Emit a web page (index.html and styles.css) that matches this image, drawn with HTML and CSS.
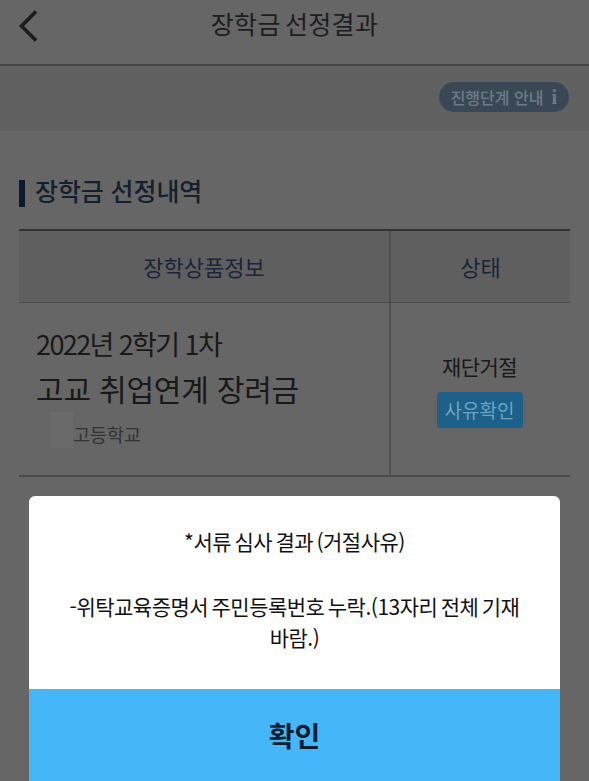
FILE: index.html
```html
<!DOCTYPE html>
<html lang="ko">
<head>
<meta charset="utf-8">
<title>장학금 선정결과</title>
<link rel="stylesheet" href="styles.css">
</head>
<body>
<div class="page">
  <header class="topbar">
    <svg class="back" width="24" height="34" viewBox="0 0 24 34" aria-hidden="true"><path d="M19 2.5 L4.5 17 L19 31.5" fill="none" stroke="#1c1c1c" stroke-width="3.6"/></svg>
    <h1 class="page-title">장학금 선정결과</h1>
  </header>
  <div class="notice-band">
    <span class="guide-pill">진행단계 안내<i class="info">i</i></span>
  </div>
  <main class="content">
    <h2 class="section-title">장학금 선정내역</h2>
    <div class="result-table">
      <div class="row head">
        <div class="cell info-col">장학상품정보</div>
        <div class="cell status-col">상태</div>
      </div>
      <div class="row body">
        <div class="cell info-col detail">
          <div class="term">2022년 2학기 1차</div>
          <div class="scholarship">고교 취업연계 장려금</div>
          <div class="school"><span class="redacted"></span><span class="school-name">고등학교</span></div>
        </div>
        <div class="cell status-col status-stack">
          <div class="status-text">재단거절</div>
          <span class="reason-btn">사유확인</span>
        </div>
      </div>
    </div>
  </main>
  <section class="modal">
    <div class="modal-body">
      <p class="modal-heading">*서류 심사 결과 (거절사유)</p>
      <p class="modal-text">-위탁교육증명서 주민등록번호 누락.(13자리 전체 기재 바람.)</p>
    </div>
    <div class="modal-confirm">확인</div>
  </section>
</div>
</body>
</html>
```
FILE: styles.css
```css
* { box-sizing: border-box; margin: 0; padding: 0; }
html, body { height: 100%; }
body {
  background: #666666;
  font-family: "Noto Sans CJK KR", "Noto Sans", sans-serif;
  color: #1b1b1b;
  overflow: hidden;
}
.page { position: relative; width: 589px; height: 781px; overflow: hidden; }

.topbar {
  height: 66px;
  border-bottom: 2px solid #454545;
  display: flex;
  align-items: center;
  justify-content: center;
  position: relative;
  padding-bottom: 18px;
}
.back { position: absolute; left: 17px; top: 9px; }
.page-title { font-size: 25px; font-weight: 400; line-height: 40px; color: #1e1e1e; letter-spacing: 0.3px; word-spacing: -3px; }

.notice-band {
  height: 65px;
  background: #616161;
  display: flex;
  align-items: flex-start;
  justify-content: flex-end;
  padding: 16px 20px 0 0;
}
.guide-pill {
  width: 130px;
  height: 30px;
  border-radius: 15px;
  background: #3a4855;
  color: #6f7b84;
  font-size: 16px;
  font-weight: 500;
  display: flex;
  align-items: center;
  justify-content: flex-end;
  gap: 8px;
  padding-right: 12px;
  white-space: nowrap;
}
.info {
  font-family: "Liberation Serif", serif;
  font-style: normal;
  font-weight: 700;
  font-size: 20px;
  line-height: 1;
}

.content { padding: 41px 19px 0; }
.section-title {
  font-size: 25px;
  font-weight: 500;
  line-height: 36px;
  color: #12202f;
  display: flex;
  align-items: center;
  gap: 10px;
  height: 36px;
  letter-spacing: -0.1px;
}
.section-title::before {
  content: "";
  width: 6px;
  height: 27px;
  background: #0c1a2c;
  margin-top: 6px;
}
.result-table { margin-top: 21px; border-top: 2px solid #333333; }
.row { display: flex; }
.cell { display: flex; }
.info-col { width: 370px; }
.status-col { flex: 1; border-left: 2px solid #4f4f4f; }
.head { height: 72px; background: #5f5f5f; border-bottom: 1px solid #4a4a4a; }
.head .cell {
  align-items: center;
  justify-content: center;
  font-size: 22px;
  color: #18263c;
  padding-bottom: 2px;
}
.body { height: 174px; border-bottom: 2px solid #4a4a4a; }
.detail { flex-direction: column; padding: 21px 0 0 17px; }
.term { font-size: 27px; line-height: 40px; letter-spacing: -1.6px; color: #191919; }
.scholarship { font-size: 30px; line-height: 46px; color: #191919; margin-top: 1px; letter-spacing: -0.2px; }
.school { display: flex; margin-top: 1px; padding-left: 15px; }
.redacted { width: 22px; height: 36px; background: #6a6a6a; flex: none; }
.school-name { font-size: 18.5px; line-height: 36px; color: #333333; margin-top: 4px; }
.status-stack { flex-direction: column; align-items: center; padding: 45px 2px 0 0; }
.status-text { font-size: 21px; line-height: 36px; color: #191919; letter-spacing: -0.6px; }
.reason-btn {
  margin-top: 8px;
  width: 86px;
  height: 36px;
  border-radius: 4px;
  background: #1d618a;
  color: #6ba4c2;
  font-size: 19px;
  line-height: 36px;
  text-align: center;
  display: block;
  white-space: nowrap;
}

.modal {
  position: absolute;
  left: 29px;
  top: 496px;
  width: 531px;
  height: 285px;
  background: #ffffff;
  border-radius: 6px 6px 0 0;
  overflow: hidden;
  display: flex;
  flex-direction: column;
}
.modal-body {
  height: 193px;
  padding: 30px 36px 0;
  text-align: center;
  font-size: 21px;
  line-height: 31px;
  color: #111111;
  letter-spacing: -0.5px;
  word-spacing: -2px;
}
.modal-text { margin-top: 34px; }
.modal-confirm {
  flex: 1;
  background: #45b6f7;
  display: flex;
  align-items: center;
  justify-content: center;
  font-size: 28px;
  font-weight: 700;
  color: #0d1e33;
}
```
